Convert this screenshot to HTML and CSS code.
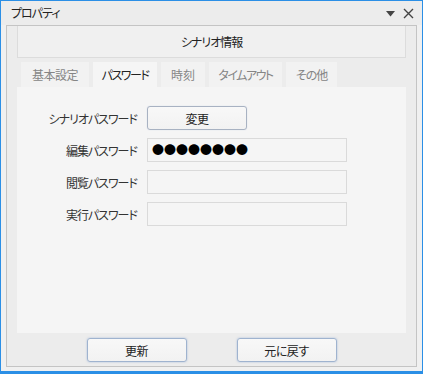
FILE: index.html
```html
<!DOCTYPE html>
<html lang="ja">
<head>
<meta charset="utf-8">
<link rel="stylesheet" href="styles.css">
</head>
<body>
<div class="window">
  <div class="titlebar">
    <span class="title">プロパティ</span>
    <div class="title-icons">
      <svg class="ic-drop" width="9" height="6" viewBox="0 0 9 6"><path d="M0 0H9L4.5 5.5Z" fill="#444"/></svg>
      <svg class="ic-close" width="11" height="11" viewBox="0 0 11 11"><path d="M1 1L10 10M10 1L1 10" stroke="#444" stroke-width="1.4" fill="none"/></svg>
    </div>
  </div>
  <div class="frame">
    <div class="header">シナリオ情報</div>
    <div class="tabs">
      <div class="tab tab-basic">基本設定</div>
      <div class="tab tab-pass active">パスワード</div>
      <div class="tab tab-time">時刻</div>
      <div class="tab tab-timeout">タイムアウト</div>
      <div class="tab tab-other">その他</div>
    </div>
    <div class="panel">
      <div class="form">
        <div class="label">シナリオパスワード</div>
        <div class="control"><button class="btn">変更</button></div>
        <div class="label">編集パスワード</div>
        <div class="control"><div class="input dots">●●●●●●●●</div></div>
        <div class="label">閲覧パスワード</div>
        <div class="control"><div class="input"></div></div>
        <div class="label">実行パスワード</div>
        <div class="control"><div class="input"></div></div>
      </div>
    </div>
    <div class="actions">
      <button class="btn focus">更新</button>
      <button class="btn focus">元に戻す</button>
    </div>
  </div>
</div>
</body>
</html>
```
FILE: styles.css
```css
* { box-sizing: border-box; }
html, body { margin: 0; padding: 0; }
body {
  font-family: "Noto Sans CJK JP", "Noto Sans", sans-serif;
  font-feature-settings: "palt";
  font-size: 12px;
  letter-spacing: -1px;
  color: #222;
}
.window {
  width: 423px;
  height: 374px;
  border: 1px solid #2b8fe6;
  border-bottom-width: 3px;
  background: #f0f0f0;
  display: flex;
  flex-direction: column;
}
.titlebar {
  height: 24px;
  background: #ececec;
  display: flex;
  align-items: center;
  justify-content: space-between;
  padding: 0 8px 0 10px;
}
.title { color: #222; line-height: 1; }
.title-icons { display: flex; align-items: center; gap: 8px; }
.ic-drop { margin-top: 1px; }
.frame {
  margin: 0 5px;
  height: 342px;
  border: 1px solid #c4c4c4;
  background: #ececec;
  display: flex;
  flex-direction: column;
}
.header {
  margin: 0 10px;
  height: 32px;
  border: 1px solid #dcdcdc;
  border-top: none;
  background: #f0f0f0;
  display: flex;
  align-items: center;
  justify-content: center;
  color: #222;
}
.tabs {
  margin: 4px 10px 0 14px;
  height: 25px;
  display: flex;
  gap: 4px;
}
.tab {
  height: 25px;
  background: #f2f2f2;
  color: #858585;
  display: flex;
  align-items: center;
  justify-content: center;
}
.tab-basic { width: 68px; letter-spacing: -0.5px; }
.tab-pass { width: 64px; letter-spacing: -1.5px; }
.tab-time { width: 44px; letter-spacing: 0; }
.tab-timeout { width: 73px; letter-spacing: -1.5px; }
.tab-other { width: 51px; }
.tab.active { background: #f5f5f5; color: #222; }
.panel {
  margin: 0 10px;
  height: 246px;
  background: #f5f5f5;
  padding-top: 19px;
}
.form {
  display: grid;
  grid-template-columns: 120px 200px;
  column-gap: 10px;
  row-gap: 8px;
  grid-auto-rows: 24px;
}
.label {
  display: flex;
  align-items: center;
  justify-content: flex-end;
  color: #333;
}
.control { display: flex; }
.btn {
  width: 100px;
  height: 24px;
  border: 1px solid #a8b2c2;
  border-radius: 3px;
  background: linear-gradient(#f8f8f8, #f2f2f2);
  font: inherit;
  letter-spacing: -0.5px;
  color: #222;
  padding: 0;
  box-shadow: 0 0 1px rgba(120, 150, 200, 0.4);
}
.btn.focus { border-color: #9fb3cf; box-shadow: 0 0 2px rgba(110, 150, 210, 0.55); }
.input {
  width: 200px;
  height: 24px;
  border: 1px solid #dadada;
  background: #f5f5f5;
}
.dots {
  font-size: 12px;
  color: #000;
  line-height: 22px;
  padding-left: 4px;
  letter-spacing: 0;
  font-feature-settings: normal;
}
.actions {
  margin-top: 5px;
  display: flex;
  justify-content: center;
  gap: 50px;
}
```
